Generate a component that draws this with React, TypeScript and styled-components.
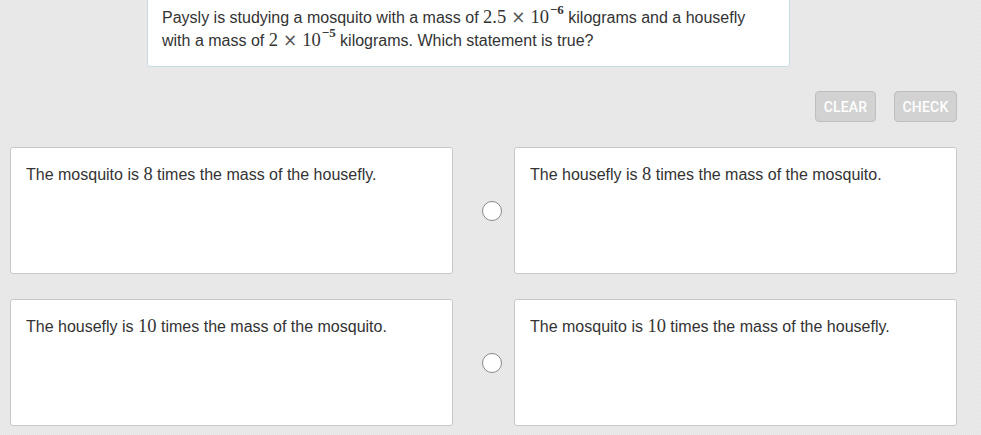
import React from 'react';
import styled, { createGlobalStyle } from 'styled-components';

const GlobalStyle = createGlobalStyle`
  html, body {
    margin: 0;
    padding: 0;
  }
  body {
    width: 981px;
    height: 435px;
    overflow: hidden;
    background-color: #e8e8e8;
    background-image: repeating-conic-gradient(#e5e5e5 0 25%, #ebebeb 0 50%);
    background-size: 2px 2px;
    font-family: 'Liberation Sans', Arial, sans-serif;
    color: #333;
  }
`;

interface Choice {
  before: string;
  num: string;
  after: string;
}

const rows: Choice[][] = [
  [
    { before: 'The mosquito is ', num: '8', after: ' times the mass of the housefly.' },
    { before: 'The housefly is ', num: '8', after: ' times the mass of the mosquito.' },
  ],
  [
    { before: 'The housefly is ', num: '10', after: ' times the mass of the mosquito.' },
    { before: 'The mosquito is ', num: '10', after: ' times the mass of the housefly.' },
  ],
];

const Sci = ({ base, exp }: { base: string; exp: string }) => (
  <MathText>
    {base}
    <Times>×</Times>
    10
    <Sup>−{exp}</Sup>
  </MathText>
);

const App = () => {
  return (
    <Page>
      <GlobalStyle />
      <QuestionBox>
        Paysly is studying a mosquito with a mass of <Sci base='2.5' exp='6' /> kilograms and a housefly
        <br />
        with a mass of <Sci base='2' exp='5' /> kilograms. Which statement is true?
      </QuestionBox>
      <ButtonRow>
        <ActionButton width={61}>CLEAR</ActionButton>
        <ActionButton width={63}>CHECK</ActionButton>
      </ButtonRow>
      <ChoiceList>
        {rows.map((row, i) => (
          <ChoiceRow key={i}>
            <ChoiceCard>
              {row[0].before}
              <MathText>{row[0].num}</MathText>
              {row[0].after}
            </ChoiceCard>
            <RadioCell>
              <Radio />
            </RadioCell>
            <ChoiceCard>
              {row[1].before}
              <MathText>{row[1].num}</MathText>
              {row[1].after}
            </ChoiceCard>
          </ChoiceRow>
        ))}
      </ChoiceList>
    </Page>
  );
};

const Page = styled.div`
  display: flex;
  flex-direction: column;
  padding: 0 24px 0 10px;
`;

const QuestionBox = styled.div`
  box-sizing: border-box;
  width: 643px;
  height: 68px;
  margin: -1px 0 0 137px;
  padding: 6px 14px 0 14px;
  background: #fff;
  border: 1px solid #c4dde3;
  border-radius: 0 0 3px 3px;
  font-size: 16px;
  line-height: 23px;
  color: #333;
`;

const MathText = styled.span`
  font-family: 'Liberation Serif', 'DejaVu Serif', serif;
  font-size: 18.5px;
  white-space: nowrap;
`;

const Times = styled.span`
  font-family: 'DejaVu Sans', sans-serif;
  font-size: 17px;
  margin: 0 5px;
  color: #555;
`;

const Sup = styled.sup`
  font-size: 13px;
  font-weight: bold;
  vertical-align: 9px;
  line-height: 0;
  margin-left: 1px;
`;

const ButtonRow = styled.div`
  display: flex;
  justify-content: flex-end;
  gap: 18px;
  margin-top: 24px;
`;

const ActionButton = styled.div<{ width: number }>`
  box-sizing: border-box;
  width: ${(p) => p.width}px;
  height: 31px;
  display: flex;
  align-items: center;
  justify-content: center;
  background: #d2d2d2;
  border: 1px solid #bebebe;
  border-radius: 4px;
  color: #fff;
  font-family: Roboto, 'Liberation Sans', sans-serif;
  font-size: 14px;
  font-weight: 500;
  letter-spacing: 0.2px;
`;

const ChoiceList = styled.div`
  display: flex;
  flex-direction: column;
  gap: 25px;
  margin-top: 25px;
`;

const ChoiceRow = styled.div`
  display: grid;
  grid-template-columns: 443px 61px 443px;
  height: 127px;
`;

const ChoiceCard = styled.div`
  box-sizing: border-box;
  background: #fff;
  border: 1px solid #c8c8c8;
  border-radius: 3px;
  padding: 15px 15px;
  font-size: 16px;
  line-height: 22px;
  color: #333;
`;

const RadioCell = styled.div`
  display: flex;
  align-items: center;
  justify-content: flex-end;
  padding-right: 12px;
`;

const Radio = styled.div`
  box-sizing: border-box;
  width: 20px;
  height: 20px;
  border-radius: 50%;
  background: #fff;
  border: 1px solid #8a8a8a;
`;

export default App;
